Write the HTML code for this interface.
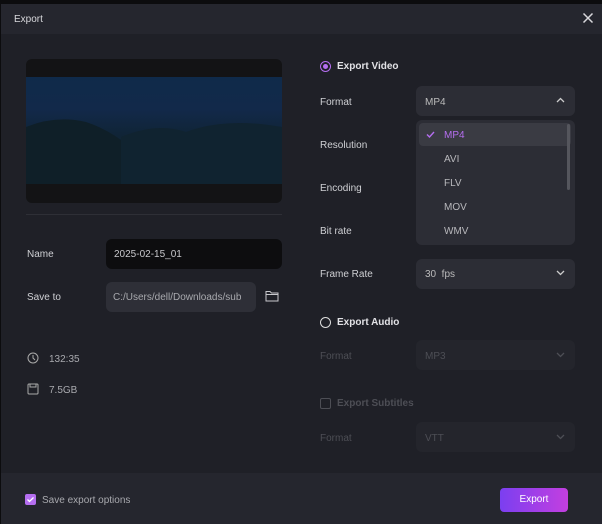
<!DOCTYPE html>
<html><head><style>
*{margin:0;padding:0;box-sizing:border-box}
body{width:602px;height:524px;background:#0c0c0e;font-family:"Liberation Sans",sans-serif;font-size:10px;color:#c8c8cc;position:relative;overflow:hidden}
.dlg{position:absolute;left:1px;top:4px;width:601px;height:520px;background:#1f2027}
.hdr{position:absolute;left:0;top:0;width:100%;height:30px;background:#25262e}
.ab{position:absolute}
.lbl{color:#cfd0d4;font-size:10px}
.box{position:absolute;border-radius:6px;background:#2c2d35}
.dim{color:#4d4e55}
</style></head><body>
<div class="dlg">
<div class="hdr"></div>
<div class="ab" style="left:13px;top:10px;color:#d8d8dc;font-size:10px">Export</div>
<svg class="ab" style="left:581px;top:8px" width="12" height="12"><path d="M1.5 1.5L10.5 10.5M10.5 1.5L1.5 10.5" stroke="#d8d8dc" stroke-width="1.5"/></svg>
<!-- preview -->
<div class="ab" style="left:25px;top:55px;width:256px;height:144px;background:#131315;border-radius:6px;overflow:hidden">
<div class="ab" style="left:0;top:18px;width:256px;height:107px;background:linear-gradient(#0f2a4a,#12294a 30%,#102436 55%,#0f2230)"></div>
<svg class="ab" style="left:0;top:18px" width="256" height="107"><path d="M0 50 Q30 38 60 45 Q90 55 115 80 L115 107 L0 107Z" fill="#0f1f28"/><path d="M95 60 Q130 45 160 55 Q200 40 256 50 L256 107 L95 107Z" fill="#102330"/></svg>
</div>
<div class="ab" style="left:25px;top:210px;width:256px;height:1px;background:#2e2f36"></div>
<div class="ab lbl" style="left:26px;top:245px">Name</div>
<div class="box" style="left:105px;top:235px;width:176px;height:30px;background:#0d0d0f"></div>
<div class="ab" style="left:113px;top:245px;color:#c8c8cc">2025-02-15_01</div>
<div class="ab lbl" style="left:26px;top:288px">Save to</div>
<div class="box" style="left:105px;top:278px;width:150px;height:30px;background:#2e2f37"></div>
<div class="ab" style="left:112px;top:288px;color:#a8a9ae">C:/Users/dell/Downloads/sub</div>
<svg class="ab" style="left:264px;top:286px" width="14" height="12"><path d="M1 1.5h4l1.5 1.5H13v8H1z M1 4.5h12" fill="none" stroke="#c8c8cc" stroke-width="1"/></svg>
<svg class="ab" style="left:26px;top:348px" width="12" height="12"><circle cx="6" cy="6" r="5" fill="none" stroke="#aaa" stroke-width="1"/><path d="M6 3v3l2 2" fill="none" stroke="#aaa"/></svg>
<div class="ab" style="left:48px;top:350px;color:#a8a9ae">132:35</div>
<svg class="ab" style="left:26px;top:379px" width="12" height="12"><rect x="1" y="1" width="10" height="10" rx="1" fill="none" stroke="#aaa"/><path d="M3 1v3h6V1" fill="none" stroke="#aaa"/></svg>
<div class="ab" style="left:48px;top:381px;color:#a8a9ae">7.5GB</div>
<!-- right -->
<div class="ab" style="left:319px;top:57px;width:11px;height:11px;border-radius:50%;border:1.5px solid #b56ef0"><div style="margin:1.5px;width:5px;height:5px;border-radius:50%;background:#b56ef0"></div></div>
<div class="ab" style="left:336px;top:57px;font-weight:bold;color:#e2e2e6">Export Video</div>
<div class="ab lbl" style="left:319px;top:93px">Format</div>
<div class="box" style="left:415px;top:82px;width:159px;height:30px"></div>
<div class="ab" style="left:424px;top:93px;color:#bbb">MP4</div>
<svg class="ab" style="left:555px;top:93px" width="9" height="7"><path d="M1 5l3.5-3.5L8 5" fill="none" stroke="#ccc" stroke-width="1.3"/></svg>
<div class="ab lbl" style="left:319px;top:136px">Resolution</div>
<div class="ab lbl" style="left:319px;top:179px">Encoding</div>
<div class="ab lbl" style="left:319px;top:222px">Bit rate</div>
<div class="box" style="left:415px;top:116px;width:159px;height:125px"></div>
<div class="ab" style="left:418px;top:119px;width:152px;height:23px;background:#3a3b43;border-radius:4px"></div>
<div class="ab" style="left:566px;top:120px;width:3px;height:66px;background:#55565d;border-radius:2px"></div>
<svg class="ab" style="left:425px;top:127px" width="9" height="7"><path d="M1 3.5l2.5 2.5L8 1" fill="none" stroke="#b56ef0" stroke-width="1.4"/></svg>
<div class="ab" style="left:443px;top:126px;color:#b56ef0">MP4</div>
<div class="ab" style="left:443px;top:150px;color:#b8b8bc">AVI</div>
<div class="ab" style="left:443px;top:174px;color:#b8b8bc">FLV</div>
<div class="ab" style="left:443px;top:198px;color:#b8b8bc">MOV</div>
<div class="ab" style="left:443px;top:222px;color:#b8b8bc">WMV</div>
<div class="ab lbl" style="left:319px;top:265px">Frame Rate</div>
<div class="box" style="left:415px;top:255px;width:159px;height:30px"></div>
<div class="ab" style="left:424px;top:265px;color:#bbb">30&nbsp; fps</div>
<svg class="ab" style="left:555px;top:265px" width="9" height="7"><path d="M1 2l3.5 3.5L8 2" fill="none" stroke="#ccc" stroke-width="1.3"/></svg>
<div class="ab" style="left:319px;top:313px;width:11px;height:11px;border-radius:50%;border:1.5px solid #ddd"></div>
<div class="ab" style="left:336px;top:313px;font-weight:bold;color:#e2e2e6">Export Audio</div>
<div class="ab dim" style="left:319px;top:347px">Format</div>
<div class="box" style="left:415px;top:336px;width:159px;height:30px;background:#24252c"></div>
<div class="ab dim" style="left:424px;top:347px">MP3</div>
<svg class="ab" style="left:555px;top:347px" width="9" height="7"><path d="M1 2l3.5 3.5L8 2" fill="none" stroke="#4d4e55" stroke-width="1.3"/></svg>
<div class="ab" style="left:319px;top:394px;width:11px;height:11px;border-radius:2px;border:1.2px solid #4d4e55"></div>
<div class="ab dim" style="left:336px;top:394px;font-weight:bold">Export Subtitles</div>
<div class="ab dim" style="left:319px;top:429px">Format</div>
<div class="box" style="left:415px;top:418px;width:159px;height:30px;background:#24252c"></div>
<div class="ab dim" style="left:424px;top:429px">VTT</div>
<svg class="ab" style="left:555px;top:429px" width="9" height="7"><path d="M1 2l3.5 3.5L8 2" fill="none" stroke="#4d4e55" stroke-width="1.3"/></svg>
<!-- footer -->
<div class="ab" style="left:0;top:469px;width:100%;height:51px;background:#25262e"></div>
<div class="ab" style="left:24px;top:490px;width:11px;height:11px;border-radius:2px;background:#b56ef0"><svg width="11" height="11"><path d="M2.5 5.5l2 2L8.5 3.5" fill="none" stroke="#fff" stroke-width="1.3"/></svg></div>
<div class="ab" style="left:41px;top:491px;color:#a8a9ae">Save export options</div>
<div class="ab" style="left:499px;top:484px;width:68px;height:24px;border-radius:4px;background:linear-gradient(90deg,#7b3ff0,#c33fe0);color:#fff;text-align:center;line-height:24px">Export</div>
</div>
</body></html>
